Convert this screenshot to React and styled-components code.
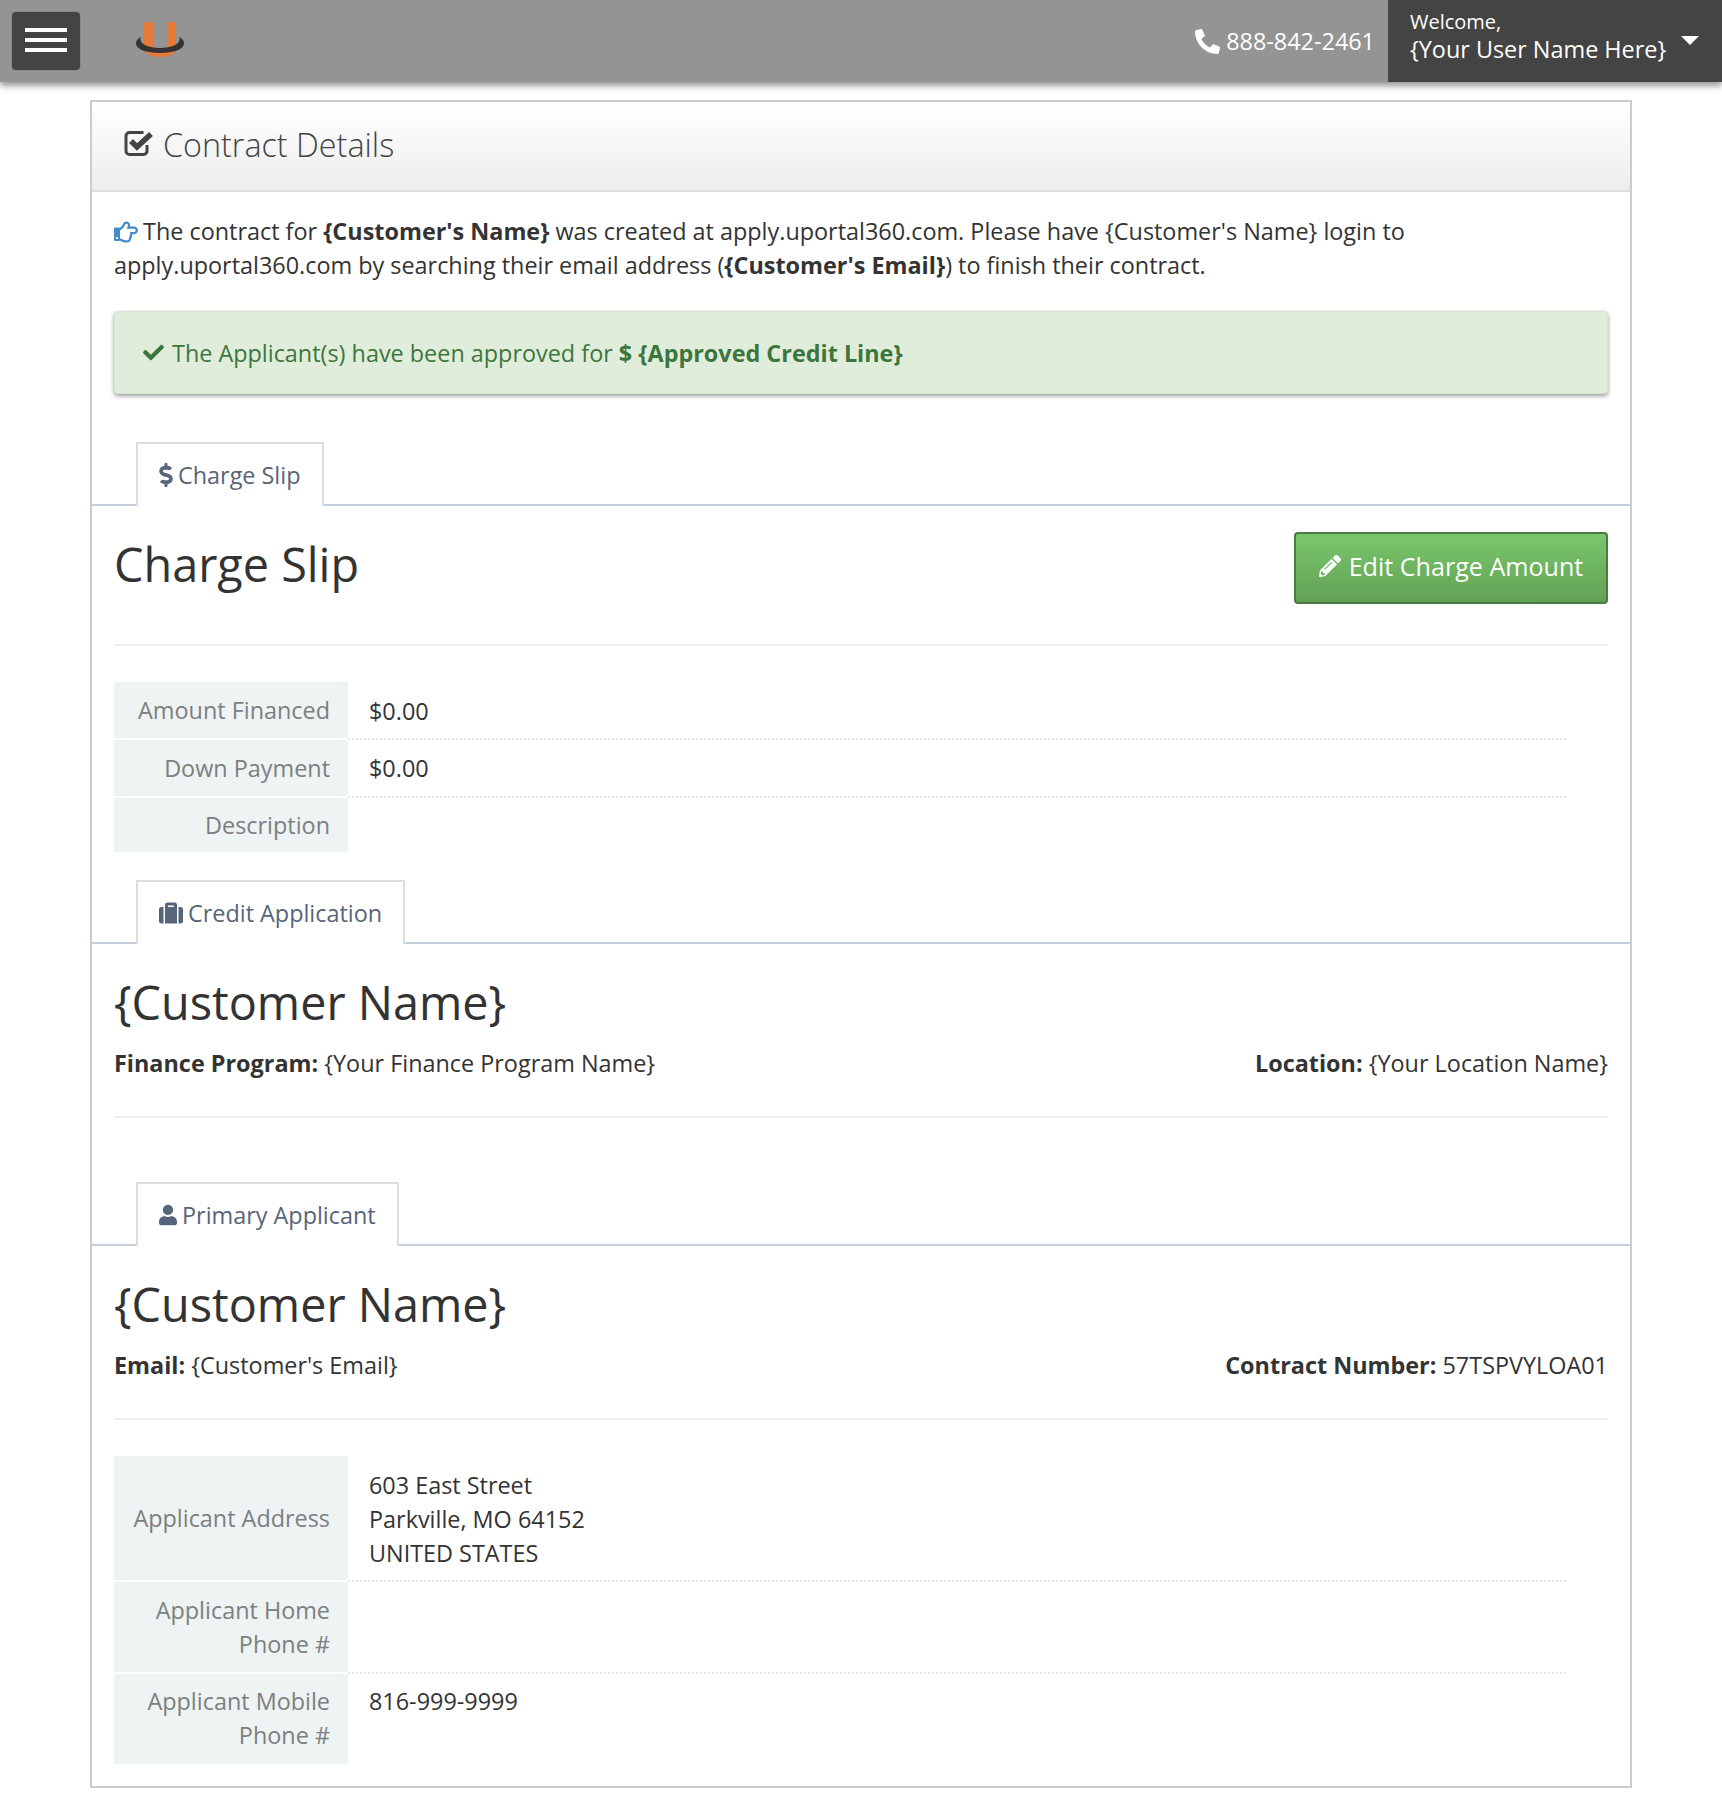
import React from 'react'
import styled, { createGlobalStyle } from 'styled-components'
import {
  FaCheck,
  FaDollarSign,
  FaPencilAlt,
  FaPhoneAlt,
  FaRegHandPointRight,
  FaSuitcase,
  FaUser,
} from 'react-icons/fa'

const GlobalStyle = createGlobalStyle`
  * { box-sizing: border-box; }
  body {
    margin: 0;
    background: #fff;
    font-family: 'Open Sans', 'Noto Sans', sans-serif;
    font-size: 23.4px;
    line-height: 34px;
    color: #333;
  }
`

const TopBar = styled.header`
  height: 82px;
  background: #949494;
  display: flex;
  align-items: stretch;
  box-shadow: 0 4px 6px rgba(0, 0, 0, 0.4);
`

const MenuButton = styled.button`
  width: 68px;
  height: 58px;
  margin: 12px 0 0 12px;
  padding: 0 0 2px;
  background: #444;
  border: 0;
  border-radius: 4px;
  box-shadow: 0 0 0 1px #888;
  display: flex;
  flex-direction: column;
  align-items: center;
  justify-content: center;
  gap: 6px;
`

const MenuBar = styled.span`
  width: 42px;
  height: 4px;
  background: #fff;
`

const Logo = styled.svg`
  width: 54px;
  height: 40px;
  margin: 20px 0 0 53px;
`

const Phone = styled.div`
  margin-left: auto;
  padding: 0 13px 0 0;
  display: flex;
  align-items: center;
  gap: 6px;
  color: #fff;
  svg { width: 25px; height: 25px; }
`

const UserBlock = styled.div`
  width: 334px;
  background: #444;
  color: #fff;
  padding: 8px 0 0 22px;
  position: relative;
`

const Welcome = styled.div`
  font-size: 20px;
  line-height: 28px;
`

const UserName = styled.div`
  line-height: 26px;
`

const Caret = styled.span`
  position: absolute;
  top: 36px;
  right: 23px;
  border-left: 9px solid transparent;
  border-right: 9px solid transparent;
  border-top: 9px solid #fff;
`

const Panel = styled.main`
  width: 1542px;
  height: 1688px;
  margin: 18px 0 0 90px;
  border: 2px solid #ccc;
`

const PanelHeading = styled.div`
  height: 90px;
  padding: 0 0 5px 32px;
  display: flex;
  align-items: center;
  gap: 8px;
  background: linear-gradient(#fff, #ededed);
  border-bottom: 2px solid #ddd;
  font-size: 32.3px;
  font-weight: 300;
  color: #444;
`

const CheckSquare = styled.svg`
  width: 31px;
  height: 27px;
`

const Intro = styled.p`
  margin: 22px 22px 0;
  svg { color: #428bca; width: 24px; height: 24px; margin-right: 5px; vertical-align: -4px; }
`

const Alert = styled.div`
  height: 83px;
  margin: 29px 22px 0;
  padding: 0 28px;
  display: flex;
  align-items: center;
  gap: 8px;
  background: #e1eddb;
  border: 1px solid #d8e6cf;
  border-radius: 4px;
  box-shadow: 0 2px 4px rgba(0, 0, 0, 0.4);
  color: #3c763d;
  svg { width: 21px; height: 21px; }
`

const TabRow = styled.div`
  margin-top: ${props => props.$top}px;
  padding-left: 44px;
  height: 64px;
  border-bottom: 2px solid #c5cedc;
  display: flex;
`

const Tab = styled.div`
  height: 64px;
  padding: 0 21px;
  display: flex;
  align-items: center;
  gap: 5px;
  background: #fff;
  border: 2px solid #ddd;
  border-bottom: 0;
  color: #56657a;
  svg { width: ${props => props.$icon || 20}px; height: 24px; }
`

const Section = styled.section`
  padding: 0 22px;
`

const HeadRow = styled.div`
  height: 140px;
  display: flex;
  justify-content: space-between;
  align-items: flex-start;
  padding-top: 26px;
  border-bottom: 2px solid #eee;
`

const Title = styled.h2`
  margin: ${props => props.$top || 0}px 0 0;
  font-size: 46.8px;
  line-height: 60px;
  font-weight: 400;
  color: #333;
`

const EditButton = styled.button`
  width: 314px;
  height: 72px;
  padding: 0 0 5px;
  display: flex;
  align-items: center;
  justify-content: center;
  gap: 8px;
  font: inherit;
  font-size: 25.1px;
  color: #fff;
  background: linear-gradient(#79c76b, #62a155);
  border: 2px solid #4a7a42;
  border-radius: 4px;
  svg { width: 22px; height: 22px; }
`

const InfoHead = styled.div`
  height: 174px;
  padding-top: 28px;
  border-bottom: 2px solid #eee;
`

const InfoLine = styled.div`
  margin-top: 14px;
  display: flex;
  justify-content: space-between;
`

const DetailList = styled.dl`
  margin: ${props => props.$top}px 0 0;
  display: grid;
  grid-template-columns: 234px 1218px;
`

const Term = styled.dt`
  min-height: ${props => props.$height}px;
  padding: 0 18px ${props => props.$lift || 0}px 10px;
  display: flex;
  align-items: center;
  justify-content: flex-end;
  text-align: right;
  background: #eef3f3;
  color: #7c8080;
  border-bottom: ${props => (props.$last ? 0 : '2px solid #fff')};
`

const Value = styled.dd`
  margin: 0;
  padding: ${props => props.$pad || 12}px 0 0 21px;
  border-bottom: ${props => (props.$last ? 0 : '2px dotted #dfe8f3')};
`

function Row({ label, height, last, pad, lift, children }) {
  return (
    <>
      <Term $height={height} $last={last} $lift={lift}>{label}</Term>
      <Value $last={last} $pad={pad}>{children}</Value>
    </>
  )
}

export default function App() {
  return (
    <>
      <GlobalStyle />
      <TopBar>
        <MenuButton aria-label="Menu">
          <MenuBar />
          <MenuBar />
          <MenuBar />
        </MenuButton>
        <Logo viewBox="0 0 54 40">
          <path d="M11 4q0-2 2-2h5q2 0 2 2v24h14V4q0-2 2-2h5q2 0 2 2v26q-3 7-16 7T11 30z" fill="#e87a37" />
          <path d="M8 17C-2 22 2 33 27 33S56 22 46 17c3 6-6 11-19 11S5 23 8 17z" fill="#333" />
        </Logo>
        <Phone><FaPhoneAlt />888-842-2461</Phone>
        <UserBlock>
          <Welcome>Welcome,</Welcome>
          <UserName>{'{Your User Name Here}'}</UserName>
          <Caret />
        </UserBlock>
      </TopBar>
      <Panel>
        <PanelHeading>
          <CheckSquare viewBox="0 0 31 27">
            <path d="M23 15v6a3.5 3.5 0 0 1-3.5 3.5h-14A3.5 3.5 0 0 1 2 21V6a3.5 3.5 0 0 1 3.5-3.5h14" fill="none" stroke="#444" strokeWidth="3" />
            <path d="M7 11l6 6L27 4" fill="none" stroke="#444" strokeWidth="5.5" />
          </CheckSquare>
          Contract Details
        </PanelHeading>
        <Intro>
          <FaRegHandPointRight />
          The contract for <b>{"{Customer's Name}"}</b> was created at apply.uportal360.com. Please have {"{Customer's Name}"} login to<br />
          apply.uportal360.com by searching their email address (<b>{"{Customer's Email}"}</b>) to finish their contract.
        </Intro>
        <Alert>
          <FaCheck />
          <span>The Applicant(s) have been approved for <b>{'$ {Approved Credit Line}'}</b></span>
        </Alert>
        <TabRow $top={48}>
          <Tab $icon={14}><FaDollarSign />Charge Slip</Tab>
        </TabRow>
        <Section>
          <HeadRow>
            <Title $top={2}>Charge Slip</Title>
            <EditButton><FaPencilAlt />Edit Charge Amount</EditButton>
          </HeadRow>
          <DetailList $top={36}>
            <Row label="Amount Financed" height={58}>$0.00</Row>
            <Row label="Down Payment" height={58} pad={11}>$0.00</Row>
            <Row label="Description" height={54} last />
          </DetailList>
        </Section>
        <TabRow $top={28}>
          <Tab $icon={24}><FaSuitcase />Credit Application</Tab>
        </TabRow>
        <Section>
          <InfoHead>
            <Title>{'{Customer Name}'}</Title>
            <InfoLine>
              <span><b>Finance Program:</b> {'{Your Finance Program Name}'}</span>
              <span><b>Location:</b> {'{Your Location Name}'}</span>
            </InfoLine>
          </InfoHead>
        </Section>
        <TabRow $top={64}>
          <Tab $icon={18}><FaUser />Primary Applicant</Tab>
        </TabRow>
        <Section>
          <InfoHead>
            <Title>{'{Customer Name}'}</Title>
            <InfoLine>
              <span><b>Email:</b> {"{Customer's Email}"}</span>
              <span><b>Contract Number:</b> 57TSPVYLOA01</span>
            </InfoLine>
          </InfoHead>
          <DetailList $top={36}>
            <Row label="Applicant Address" height={126}>603 East Street<br />Parkville, MO 64152<br />UNITED STATES</Row>
            <Row label="Applicant Home Phone #" height={92} />
            <Row label="Applicant Mobile Phone #" height={90} pad={10} lift={2} last>816-999-9999</Row>
          </DetailList>
        </Section>
      </Panel>
    </>
  )
}
